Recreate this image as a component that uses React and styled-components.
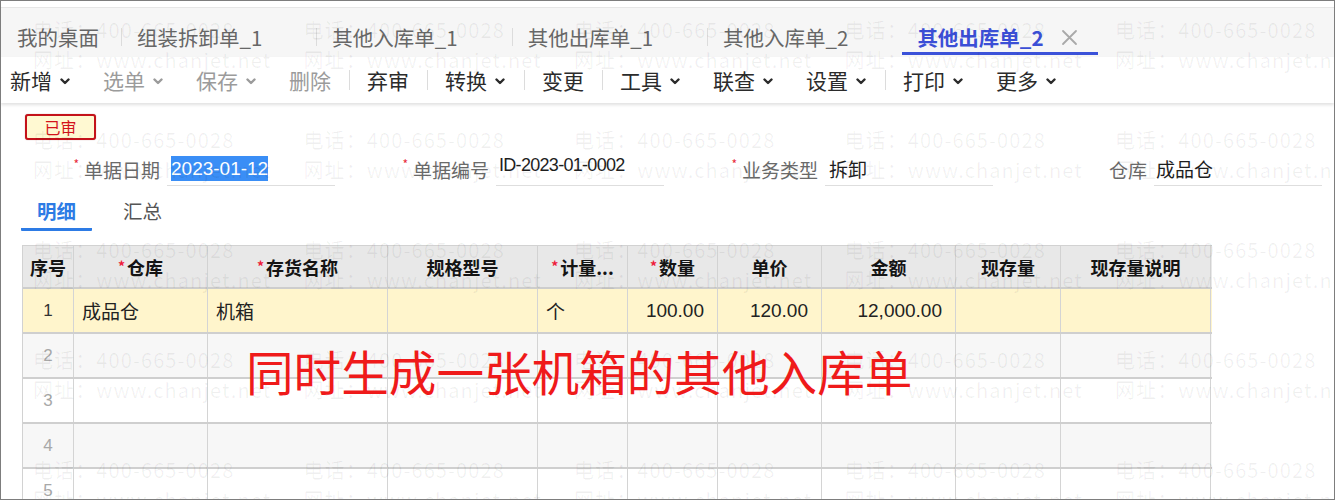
import React from 'react';
import styled, { createGlobalStyle } from 'styled-components';

const cjk = `"Noto Sans CJK SC", "Noto Sans", sans-serif`;
const latin = `"Liberation Sans", "Noto Sans CJK SC", sans-serif`;

const GlobalStyle = createGlobalStyle`
  body {
    margin: 0;
    background: #fff;
  }
`;

const Frame = styled.div`
  position: relative;
  width: 1335px;
  height: 500px;
  box-sizing: border-box;
  border: 1px solid #7d7d7d;
  padding-top: 6px;
  overflow: hidden;
  background: #fff;
  font-family: ${cjk};
`;

const TabBar = styled.div`
  display: flex;
  height: 49px;
  border-top: 1px solid #e6e6e6;
  background: #f6f6f6;
`;

const Tab = styled.div`
  position: relative;
  display: flex;
  align-items: center;
  box-sizing: border-box;
  padding: 9px ${(p) => (p.$home ? '22px' : '17px')} 0 ${(p) => (p.$home ? '16px' : '15px')};
  font-size: 20.5px;
  color: ${(p) => (p.$active ? '#3b4fd6' : '#676767')};
  font-weight: ${(p) => (p.$active ? 700 : 400)};
  white-space: nowrap;

  &::after {
    content: '';
    display: ${(p) => (p.$active ? 'block' : 'none')};
    position: absolute;
    left: 0;
    right: 0;
    bottom: 2px;
    height: 3px;
    background: #3b52d9;
  }
`;

const CloseSlot = styled.span`
  display: flex;
  align-items: center;
  justify-content: center;
  width: 22px;
  margin-left: 15px;
  color: #a9a9a9;
`;

const TabSep = styled.span`
  align-self: center;
  margin-top: 9px;
  width: 1px;
  height: 18px;
  background: #dcdcdc;
`;

const Toolbar = styled.div`
  position: relative;
  display: flex;
  align-items: center;
  height: 46px;
  background: #fff;
  box-shadow: 0 2px 3px rgba(0, 0, 0, 0.12);
`;

const ToolItem = styled.div`
  display: flex;
  align-items: center;
  gap: 6px;
  padding: 0 16px;
  font-size: 21px;
  color: ${(p) => (p.$disabled ? '#9b9b9b' : '#2b2b2b')};
  white-space: nowrap;

  &:first-child {
    padding-left: 9px;
  }
`;

const Chevron = styled.span`
  display: flex;
  align-items: center;
  justify-content: center;
  width: 13px;
  margin-top: 2px;
`;

const ToolSep = styled.span`
  width: 1px;
  height: 20px;
  margin: 0 1.5px;
  background: #dcdcdc;
`;

const Body = styled.div`
  padding-left: 0;
`;

const StatusBadge = styled.div`
  display: flex;
  align-items: center;
  justify-content: center;
  width: 71px;
  height: 26px;
  box-sizing: border-box;
  margin: 11px 0 0 24px;
  border: 2px solid #c4121a;
  border-radius: 3px;
  background: #fff9d2;
  color: #d4141b;
  font-size: 16px;
  box-shadow: 0 0 1px rgba(120, 0, 0, 0.5);
`;

const FormRow = styled.div`
  display: grid;
  grid-template-columns: repeat(4, 329px);
  margin-top: 12px;
  padding-left: 5px;
`;

const Field = styled.div`
  display: flex;
  align-items: center;
  justify-content: flex-end;
  gap: 7px;
`;

const Label = styled.span`
  display: flex;
  align-items: flex-start;
  font-size: 19px;
  color: #6a6a6a;
  white-space: nowrap;
`;

const Req = styled.span`
  color: #e8283a;
  font-size: 12px;
  line-height: 1;
  margin: 2px 5px 0 0;
`;

const InputBox = styled.div`
  display: flex;
  align-items: center;
  box-sizing: border-box;
  width: 168px;
  height: 34px;
  padding-left: ${(p) => p.$pad || 3}px;
  border-bottom: 1px solid #dedede;
  font-size: 19px;
  color: #1e1e1e;
  white-space: nowrap;
`;

const LatinValue = styled.span`
  font-family: ${latin};
  font-size: ${(p) => p.$size || 18}px;
  letter-spacing: ${(p) => p.$spacing || 0}px;
  margin-top: ${(p) => p.$lift || 0}px;
`;

const Selected = styled(LatinValue)`
  display: inline-flex;
  align-items: center;
  height: 25px;
  background: #3a8ef6;
  color: #fff;
`;

const SubTabs = styled.div`
  display: flex;
  gap: 15px;
  margin: 6px 0 0 20px;
`;

const SubTab = styled.div`
  display: flex;
  align-items: center;
  height: 36px;
  padding: 0 16px;
  border-bottom: 3px solid ${(p) => (p.$active ? '#2d7be5' : 'transparent')};
  border-radius: 1px;
  font-size: 19.5px;
  font-weight: ${(p) => (p.$active ? 700 : 400)};
  color: ${(p) => (p.$active ? '#2d7be5' : '#555')};
`;

const Grid = styled.div`
  margin: 14px 0 0 21px;
  width: 1189px;
  border-left: 1px solid #d2d2d2;
`;

const colTemplate = '51px 134px 180px 150px 90px 90px 104px 134px 105px 150px';

const HeadRow = styled.div`
  display: grid;
  grid-template-columns: ${colTemplate};
  height: 44px;
  box-sizing: border-box;
  border-top: 1px solid #d2d2d2;
  border-bottom: 2px solid #cdcdcd;
  background: #e8e8e8;
`;

const HeadCell = styled.div`
  display: flex;
  align-items: center;
  justify-content: center;
  border-right: 1px solid #d2d2d2;
  font-size: 18px;
  font-weight: 700;
  color: #141414;
  white-space: nowrap;
  overflow: hidden;
`;

const HeadReq = styled.span`
  color: #ee1c3c;
  font-size: 14px;
  font-weight: 700;
  margin: -2px 2px 0 0;
`;

const Row = styled.div`
  display: grid;
  grid-template-columns: ${colTemplate};
  height: 45px;
  box-sizing: border-box;
  border-bottom: 2px solid #cfcfcf;
  background: ${(p) => p.$bg};
`;

const Cell = styled.div`
  display: flex;
  align-items: center;
  justify-content: ${(p) =>
    p.$align === 'right' ? 'flex-end' : p.$align === 'center' ? 'center' : 'flex-start'};
  padding: ${(p) => (p.$align === 'right' ? '0 13px 0 0' : p.$align === 'center' ? '0' : '0 0 0 8px')};
  border-right: 1px solid #d4d4d4;
  font-size: 19px;
  color: #222;
  white-space: nowrap;
  overflow: hidden;
`;

const Num = styled.span`
  font-family: ${latin};
  font-size: ${(p) => p.$size || 19}px;
  color: ${(p) => p.$color || '#222'};
`;

const Note = styled.div`
  position: absolute;
  left: 245px;
  top: 346px;
  z-index: 3;
  font-size: 47.6px;
  line-height: 1;
  color: #ef1a1a;
  white-space: nowrap;
`;

const Watermark = styled.div`
  position: absolute;
  inset: 0;
  z-index: 2;
  pointer-events: none;
`;

const WatermarkGrid = styled.div`
  position: absolute;
  left: 32px;
  top: 14px;
  display: grid;
  grid-template-columns: repeat(5, 270.5px);
  grid-auto-rows: 110px;
`;

const Stamp = styled.div`
  font-size: 20px;
  line-height: 30px;
  letter-spacing: 1.1px;
  color: rgba(0, 0, 0, 0.06);
  white-space: nowrap;
`;

const tabs = [
  { label: '我的桌面', home: true },
  { label: '组装拆卸单_1' },
  { label: '其他入库单_1' },
  { label: '其他出库单_1' },
  { label: '其他入库单_2', last: true },
  { label: '其他出库单_2', active: true },
];

const tools = [
  { label: '新增', menu: true },
  { label: '选单', menu: true, disabled: true },
  { label: '保存', menu: true, disabled: true },
  { label: '删除', disabled: true, sep: true },
  { label: '弃审', sep: true },
  { label: '转换', menu: true, sep: true },
  { label: '变更', sep: true },
  { label: '工具', menu: true },
  { label: '联查', menu: true },
  { label: '设置', menu: true, sep: true },
  { label: '打印', menu: true },
  { label: '更多', menu: true },
];

const columns = [
  { title: '序号' },
  { title: '仓库', req: true },
  { title: '存货名称', req: true },
  { title: '规格型号' },
  { title: '计量...', req: true },
  { title: '数量', req: true },
  { title: '单价' },
  { title: '金额' },
  { title: '现存量' },
  { title: '现存量说明' },
];

const aligns = ['center', 'left', 'left', 'left', 'left', 'right', 'right', 'right', 'left', 'left'];
const firstRow = ['成品仓', '机箱', '', '个', '100.00', '120.00', '12,000.00', '', ''];
const rowColors = ['#fff5cc', '#f7f7f7', '#ffffff', '#f7f7f7', '#ffffff'];

function ChevronDown() {
  return (
    <Chevron>
      <svg width="10" height="7" viewBox="0 0 10 7">
        <polyline points="1.5,1.5 5,5 8.5,1.5" fill="none" stroke="currentColor" strokeWidth="2.4" strokeLinecap="round" strokeLinejoin="round" />
      </svg>
    </Chevron>
  );
}

function CloseIcon() {
  return (
    <svg width="17" height="17" viewBox="0 0 17 17">
      <path d="M2 2 L15 15 M15 2 L2 15" stroke="currentColor" strokeWidth="1.8" strokeLinecap="round" />
    </svg>
  );
}

export default function App() {
  return (
    <Frame>
      <GlobalStyle />
      <TabBar>
        {tabs.map((t) => (
          <React.Fragment key={t.label}>
            <Tab $home={t.home} $active={t.active}>
              {t.label}
              {!t.home && <CloseSlot>{t.active && <CloseIcon />}</CloseSlot>}
            </Tab>
            {!t.active && !t.last && <TabSep />}
          </React.Fragment>
        ))}
      </TabBar>

      <Toolbar>
        {tools.map((t) => (
          <React.Fragment key={t.label}>
            <ToolItem $disabled={t.disabled}>
              {t.label}
              {t.menu && <ChevronDown />}
            </ToolItem>
            {t.sep && <ToolSep />}
          </React.Fragment>
        ))}
      </Toolbar>

      <Body>
        <StatusBadge>已审</StatusBadge>

        <FormRow>
          <Field>
            <Label><Req>*</Req>单据日期</Label>
            <InputBox $pad={4}>
              <Selected $size={19}>2023-01-12</Selected>
            </InputBox>
          </Field>
          <Field>
            <Label><Req>*</Req>单据编号</Label>
            <InputBox $pad={0}>
              <LatinValue $size={18} $spacing={-0.7} $lift={-6}>ID-2023-01-0002</LatinValue>
            </InputBox>
          </Field>
          <Field>
            <Label><Req>*</Req>业务类型</Label>
            <InputBox $pad={4}>拆卸</InputBox>
          </Field>
          <Field>
            <Label>仓库</Label>
            <InputBox $pad={2}>成品仓</InputBox>
          </Field>
        </FormRow>

        <SubTabs>
          <SubTab $active>明细</SubTab>
          <SubTab>汇总</SubTab>
        </SubTabs>

        <Grid>
          <HeadRow>
            {columns.map((c) => (
              <HeadCell key={c.title}>
                {c.req && <HeadReq>*</HeadReq>}
                {c.title}
              </HeadCell>
            ))}
          </HeadRow>
          {rowColors.map((bg, i) => (
            <Row key={i} $bg={bg}>
              <Cell $align="center">
                <Num $size={17} $color={i === 0 ? '#333' : '#a8a8a8'}>{i + 1}</Num>
              </Cell>
              {firstRow.map((v, j) => (
                <Cell key={j} $align={aligns[j + 1]}>
                  {i === 0 && (/^[\d,.]+$/.test(v) ? <Num>{v}</Num> : v)}
                </Cell>
              ))}
            </Row>
          ))}
        </Grid>
      </Body>

      <Note>同时生成一张机箱的其他入库单</Note>

      <Watermark>
        <WatermarkGrid>
          {Array.from({ length: 25 }).map((_, i) => (
            <div key={i}>
              <Stamp>电话：400-665-0028</Stamp>
              <Stamp>网址：www.chanjet.net</Stamp>
            </div>
          ))}
        </WatermarkGrid>
      </Watermark>
    </Frame>
  );
}
